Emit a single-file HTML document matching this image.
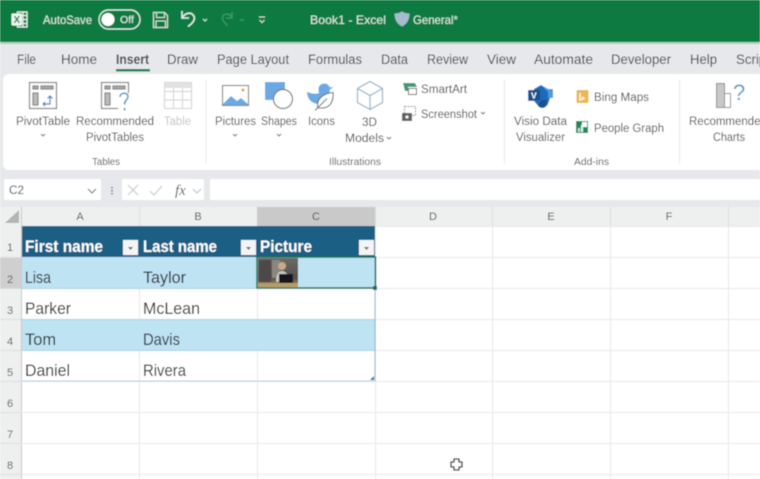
<!DOCTYPE html>
<html><head><meta charset="utf-8"><style>
html,body{margin:0;padding:0;background:#fff}
svg{display:block;font-family:"Liberation Sans",sans-serif}
.tb{fill:#dcefe4;font-size:12px}
.tab{fill:#404040;font-size:13.5px}
.lb{fill:#464646;font-size:11.5px}
.gp{fill:#505050;font-size:10px}
.hd{fill:#4a4a4a;font-size:11px;text-anchor:middle}
.rn{fill:#555;font-size:11px;text-anchor:middle}
.c{fill:#202020;font-size:17px}
.h{fill:#fff;font-size:17px;font-weight:bold}
</style></head><body>
<svg width="760" height="479" viewBox="0 0 760 479" xmlns="http://www.w3.org/2000/svg">
<defs><filter id="b" x="-5%" y="-5%" width="110%" height="110%"><feGaussianBlur stdDeviation="0.4"/></filter>
<linearGradient id="ph" x1="0" y1="0" x2="0" y2="1"><stop offset="0" stop-color="#6d6a66"/><stop offset=".7" stop-color="#55514c"/><stop offset="1" stop-color="#a89468"/></linearGradient></defs>
<g filter="url(#b)">
<rect width="760" height="479" fill="#fff"/>
<!-- title bar -->
<rect width="760" height="42" fill="#0c7a43"/>
<rect y="42" width="760" height="2" fill="#a9d3bb"/>
<rect y="44" width="760" height="165" fill="#e6e8eb"/>
<!-- excel icon -->
<rect x="17.500" y="12" width="9.500" height="15" fill="#0c7a43" stroke="#e8f2ec" stroke-width="1.300"/>
<path d="M20 15.500h7M20 19.500h7M20 23.500h7M23 12v15" stroke="#e8f2ec" stroke-width="1.200"/>
<rect x="11.500" y="13.500" width="10.500" height="12" rx="1" fill="#eef5f0"/>
<text x="13.500" y="23" font-size="10" font-weight="bold" fill="#0c7a43">X</text>
<text class="tb" x="43" y="24" textLength="49" lengthAdjust="spacingAndGlyphs">AutoSave</text>
<rect x="99" y="10" width="41" height="19" rx="9.500" fill="none" stroke="#e8f2ec" stroke-width="1.200"/>
<circle cx="108" cy="19.500" r="6.500" fill="#fff"/>
<text x="120" y="23" font-size="10" fill="#e8f2ec" textLength="14" lengthAdjust="spacingAndGlyphs">Off</text>
<!-- save -->
<path d="M153.500 12.500h11l3 3v12h-14z" fill="none" stroke="#cfe5d8" stroke-width="1.200"/>
<path d="M156.500 13v4.500h8v-4.500M156 27v-6h9.500v6" fill="none" stroke="#cfe5d8" stroke-width="1.100"/>
<!-- undo -->
<path d="M182 11v7h7M182.500 17.500c3-5 8.500-5.500 11-2 2.500 3.500-.5 7.500-5.500 11" fill="none" stroke="#dcefe4" stroke-width="1.600"/>
<path d="M203 19l2 2 2-2" fill="none" stroke="#cfe5d8" stroke-width="1"/>
<path d="M232 12v6h-6M232 17c-3-4-7.500-3.500-9-1-1.500 2.500.5 6 4.500 9.500" fill="none" stroke="#3f9a6a" stroke-width="1.300"/>
<path d="M240 19l2 2 2-2" fill="none" stroke="#3f9a6a" stroke-width="1"/>
<path d="M259 17h6M259.500 20l2.500 2.500 2.500-2.500" fill="none" stroke="#cfe5d8" stroke-width="1"/>
<text class="tb" x="310" y="24" textLength="76" lengthAdjust="spacingAndGlyphs">Book1  -  Excel</text>
<path d="M402 11.500c2.500 1.500 5 2 7.500 2 0 6-2.500 10.500-7.500 13-5-2.500-7.500-7-7.500-13 2.500 0 5-.5 7.500-2z" fill="#a4bccd"/>
<text class="tb" x="413" y="24" textLength="45" lengthAdjust="spacingAndGlyphs">General*</text>
<!-- tabs -->
<text class="tab" x="17" y="64" textLength="19" lengthAdjust="spacingAndGlyphs">File</text>
<text class="tab" x="61" y="64" textLength="36" lengthAdjust="spacingAndGlyphs">Home</text>
<text class="tab" x="116" y="64" textLength="33" lengthAdjust="spacingAndGlyphs" style="font-weight:bold">Insert</text>
<rect x="116" y="69" width="34" height="2.500" fill="#1f7c4d"/>
<text class="tab" x="167" y="64" textLength="31" lengthAdjust="spacingAndGlyphs">Draw</text>
<text class="tab" x="217" y="64" textLength="72" lengthAdjust="spacingAndGlyphs">Page Layout</text>
<text class="tab" x="308" y="64" textLength="54" lengthAdjust="spacingAndGlyphs">Formulas</text>
<text class="tab" x="381" y="64" textLength="27" lengthAdjust="spacingAndGlyphs">Data</text>
<text class="tab" x="427" y="64" textLength="41" lengthAdjust="spacingAndGlyphs">Review</text>
<text class="tab" x="487" y="64" textLength="29" lengthAdjust="spacingAndGlyphs">View</text>
<text class="tab" x="534" y="64" textLength="59" lengthAdjust="spacingAndGlyphs">Automate</text>
<text class="tab" x="611" y="64" textLength="60" lengthAdjust="spacingAndGlyphs">Developer</text>
<text class="tab" x="690" y="64" textLength="27" lengthAdjust="spacingAndGlyphs">Help</text>
<text class="tab" x="736" y="64" textLength="34" lengthAdjust="spacingAndGlyphs">Script</text>
<!-- ribbon -->
<rect x="3" y="74" width="780" height="96" rx="6" fill="#fff"/>
<path d="M206 80v84M504.500 80v84M679.500 80v84" stroke="#e8e8e8" stroke-width="1"/>
<!-- pivot icon -->
<g fill="none" stroke="#8a8a8a" stroke-width="1.300">
<rect x="29.500" y="82.500" width="27" height="26"/><rect x="33" y="86" width="5" height="3" fill="#aaa"/><rect x="41" y="86" width="12" height="3" fill="#aaa"/><rect x="33" y="93" width="5" height="12" fill="#bbb"/>
<rect x="101.500" y="82.500" width="27" height="26"/><rect x="105" y="86" width="5" height="3" fill="#aaa"/><rect x="113" y="86" width="12" height="3" fill="#aaa"/><rect x="105" y="93" width="5" height="12" fill="#bbb"/>
</g>
<path d="M43 104h7v-8M47.500 98.500l2.500-2.500 2.500 2.500M43 104l2-2M43 104l2 2" fill="none" stroke="#3a80b8" stroke-width="1.200"/>
<rect x="118" y="93" width="13" height="18" fill="#fff"/>
<path d="M120 97c0-5 8-5 8-.5 0 3.500-3.500 3.500-3.500 8M124.500 108v2.500" fill="none" stroke="#4a97c9" stroke-width="1.600"/>
<g fill="none" stroke="#d8d8d8" stroke-width="1.200"><rect x="164.500" y="82.500" width="27" height="26"/><path d="M164 91.500h28M164 100h28M173.500 82v27M182.500 82v27"/></g>
<rect x="165" y="83" width="26" height="5" fill="#e2e2e2"/>
<!-- pictures -->
<rect x="222.500" y="85.500" width="26" height="20" fill="#fff" stroke="#8a8a8a" stroke-width="1.200"/>
<path d="M223 104l8-8 6 5 4-3 7 6v1h-25z" fill="#6aa9e4"/><circle cx="243" cy="90" r="1.500" fill="#e0a040"/>
<!-- shapes -->
<rect x="265" y="82" width="20" height="18" fill="#6aa9e4"/>
<circle cx="283" cy="99" r="9.500" fill="#fff" stroke="#7a7a7a" stroke-width="1.200"/>
<!-- icons: duck + leaf -->
<path d="M307 91.500c3 2 8 3 12 1.500-.5-1.500-.5-3-.5-4 0-3.500 3-5.500 6-5.500 2.500 0 4.500 1.500 5 3.500l4 .5-3.500 2c-.5 4-2 7-5 9-2 3-4 5-6 5.500-7 0-12-5-12-12.500z" fill="#6aa9e4"/>
<path d="M318 108c-2-7 3-14.500 15-15.500 1 10-4 16-12 15.500z" fill="#fff" stroke="#6b6b6b" stroke-width="1.100"/>
<path d="M315 110.500l12-12" fill="none" stroke="#6b6b6b" stroke-width="1.100"/>
<!-- 3D -->
<path d="M370 81.500l12.500 7v14l-12.500 7-12.500-7v-14zM357.500 88.500l12.500 7 12.500-7M370 95.500v14" fill="none" stroke="#8fb2cc" stroke-width="1.200"/>
<!-- smartart -->
<path d="M403 83h12l2 4h-9v4h-3z" fill="#3f9a78"/>
<rect x="408.500" y="88.500" width="8" height="6" fill="#fff" stroke="#666"/>
<!-- screenshot -->
<rect x="404.500" y="106.500" width="11" height="9" fill="none" stroke="#888" stroke-dasharray="2 1"/>
<rect x="402.500" y="113.500" width="9" height="7" fill="#666" stroke="#555"/><circle cx="407" cy="117" r="1.500" fill="#fff"/>
<!-- visio -->
<path d="M534 89l7-4 7 4 5 0v9h-3l-2 6c-2 4-6 5-9 3l-5-6h-6V90h6z" fill="#1a6bb8"/>
<path d="M541 85l7 4h5v9h-5v-6z" fill="#4a9ae0"/><rect x="529" y="90" width="11" height="10" rx="1" fill="#14518f"/>
<text x="531" y="98.500" font-size="8.500" font-weight="bold" fill="#fff">V</text>
<path d="M541 100h6c0 3-1 6-3 7.500-2 .5-4 0-6-1.500z" fill="#1d4f8f"/>
<!-- bing -->
<rect x="576.500" y="90" width="12" height="13" rx="1" fill="#edb84d"/>
<path d="M580 93v7l4-1.500-2-1.500" fill="none" stroke="#fff" stroke-width="1.200"/>
<!-- people graph -->
<rect x="576" y="121" width="12" height="12" fill="#1a8a5a"/>
<rect x="582" y="122" width="5" height="5" fill="#fff"/><rect x="578" y="128" width="2" height="4" fill="#c8e8d8"/><rect x="581" y="125" width="2" height="7" fill="#e8f4ee"/>
<!-- rec charts -->
<rect x="716.500" y="83.500" width="8" height="24" fill="#c8c8c8" stroke="#8a8a8a"/>
<rect x="724.500" y="93.500" width="6" height="14" fill="#fff" stroke="#8a8a8a"/>
<text x="733" y="100" font-size="22" fill="#5b9bc4">?</text>
<!-- ribbon labels -->
<text class="lb" x="16" y="125" textLength="54" lengthAdjust="spacingAndGlyphs">PivotTable</text>
<text class="lb" x="76" y="125" textLength="78" lengthAdjust="spacingAndGlyphs">Recommended</text>
<text class="lb" x="86" y="141" textLength="58" lengthAdjust="spacingAndGlyphs">PivotTables</text>
<text class="lb" x="164" y="125" textLength="27" lengthAdjust="spacingAndGlyphs" style="fill:#c4c4c4">Table</text>
<text class="lb" x="215" y="125" textLength="41" lengthAdjust="spacingAndGlyphs">Pictures</text>
<text class="lb" x="261" y="125" textLength="36" lengthAdjust="spacingAndGlyphs">Shapes</text>
<text class="lb" x="308" y="125" textLength="27" lengthAdjust="spacingAndGlyphs">Icons</text>
<text class="lb" x="362" y="126" textLength="15" lengthAdjust="spacingAndGlyphs">3D</text>
<text class="lb" x="345" y="142" textLength="39" lengthAdjust="spacingAndGlyphs">Models</text>
<text class="lb" x="421" y="93" textLength="46" lengthAdjust="spacingAndGlyphs">SmartArt</text>
<text class="lb" x="421" y="118" textLength="56" lengthAdjust="spacingAndGlyphs">Screenshot</text>
<text class="lb" x="514" y="125" textLength="53" lengthAdjust="spacingAndGlyphs">Visio Data</text>
<text class="lb" x="516" y="141" textLength="49" lengthAdjust="spacingAndGlyphs">Visualizer</text>
<text class="lb" x="594" y="101" textLength="55" lengthAdjust="spacingAndGlyphs">Bing Maps</text>
<text class="lb" x="594" y="132" textLength="70" lengthAdjust="spacingAndGlyphs">People Graph</text>
<text class="lb" x="689" y="125" textLength="78" lengthAdjust="spacingAndGlyphs">Recommended</text>
<text class="lb" x="713" y="141" textLength="32" lengthAdjust="spacingAndGlyphs">Charts</text>
<g fill="none" stroke="#666" stroke-width="1">
<path d="M41 134l2 2 2-2M233 134l2 2 2-2M277 134l2 2 2-2M387 137l2 2 2-2M481 112l2 2 2-2"/></g>
<text class="gp" x="92" y="165" textLength="28" lengthAdjust="spacingAndGlyphs">Tables</text>
<text class="gp" x="329" y="165" textLength="52" lengthAdjust="spacingAndGlyphs">Illustrations</text>
<text class="gp" x="574" y="165" textLength="35" lengthAdjust="spacingAndGlyphs">Add-ins</text>
<!-- formula bar -->
<rect x="4" y="179" width="97" height="21" rx="2" fill="#fff"/>
<text x="9" y="194" font-size="12" fill="#444" textLength="15" lengthAdjust="spacingAndGlyphs">C2</text>
<path d="M88 189l4 4 4-4" fill="none" stroke="#666" stroke-width="1.100"/>
<path d="M112 187v1.500M112 190v1.500M112 193v1.500" stroke="#555" stroke-width="1.500"/>
<rect x="122" y="179" width="82" height="21" rx="2" fill="#fff"/>
<path d="M128 185l10 10M138 185l-10 10" stroke="#c8c8c8" stroke-width="1.200"/>
<path d="M150 191l4 4 8-9" fill="none" stroke="#c8c8c8" stroke-width="1.200"/>
<text x="175" y="195" font-family="Liberation Serif" font-style="italic" font-size="15" fill="#555">fx</text>
<path d="M193 189l4 4 4-4" fill="none" stroke="#bbb" stroke-width="1"/>
<rect x="210" y="179" width="550" height="21" rx="2" fill="#fff"/>
<!-- headers -->
<rect y="207" width="760" height="19" fill="#eef0f0"/>
<rect x="0" y="226" width="21" height="253" fill="#eef0f0"/>
<rect x="257" y="207" width="118" height="19" fill="#c9c9c9"/>
<rect x="0" y="257" width="21" height="31" fill="#cfcfcf"/>
<path d="M19 210v13h-14z" fill="#b4b4b4"/>
<path d="M21.500 207v272" stroke="#c8c8c8"/>
<path d="M139.500 207v19M375.500 207v19M492.500 207v19M610.500 207v19M728.500 207v19" stroke="#dcdcdc"/>
<path d="M0 319.500h21M0 350.500h21M0 381.500h21M0 412.500h21M0 443.500h21M0 474.500h21M0 288.500h21M0 257.500h21" stroke="#dcdcdc"/>
<text class="hd" x="80" y="220">A</text><text class="hd" x="198" y="220">B</text><text class="hd" x="316" y="220">C</text><text class="hd" x="433" y="220">D</text><text class="hd" x="551" y="220">E</text><text class="hd" x="669" y="220">F</text>
<text class="rn" x="10" y="251">1</text><text class="rn" x="10" y="283">2</text><text class="rn" x="10" y="314">3</text><text class="rn" x="10" y="345">4</text><text class="rn" x="10" y="376">5</text><text class="rn" x="10" y="407">6</text><text class="rn" x="10" y="438">7</text><text class="rn" x="10" y="469">8</text>
<!-- grid -->
<g stroke="#e8e8e8"><path d="M21 412.500h739M21 443.500h739M21 474.500h739M21 381.500h739M375 257.500h385M375 288.500h385M375 319.500h385M375 350.500h385M375 226.500h385M139.500 288v31M139.500 350v129M257.500 288v191M375.500 226v253M492.500 226v253M610.500 226v253M728.500 226v253"/></g>
<!-- table -->
<rect x="22" y="226" width="353" height="31" fill="#1b5f85"/>
<rect x="22" y="257" width="353" height="31" fill="#bee3f3"/>
<rect x="22" y="319" width="353" height="31" fill="#bee3f3"/>
<path d="M22 288.500h353M22 319.500h353M22 350.500h353M22 381h353" stroke="#a8d2e6"/>
<path d="M375 257v124" stroke="#7fb4cf"/>
<g fill="#f4f4f4"><rect x="123" y="240" width="15" height="15"/><rect x="241" y="240" width="15" height="15"/><rect x="359" y="240" width="15" height="15"/></g>
<path d="M128 247h5l-2.500 3zM246 247h5l-2.500 3zM364 247h5l-2.500 3z" fill="#666"/>
<text class="h" x="25" y="252" textLength="78" lengthAdjust="spacingAndGlyphs">First name</text>
<text class="h" x="143" y="252" textLength="74" lengthAdjust="spacingAndGlyphs">Last name</text>
<text class="h" x="260" y="252" textLength="52" lengthAdjust="spacingAndGlyphs">Picture</text>
<text class="c" x="25" y="283" textLength="26" lengthAdjust="spacingAndGlyphs">Lisa</text>
<text class="c" x="143" y="283" textLength="43" lengthAdjust="spacingAndGlyphs">Taylor</text>
<text class="c" x="25" y="314" textLength="46" lengthAdjust="spacingAndGlyphs">Parker</text>
<text class="c" x="143" y="314" textLength="57" lengthAdjust="spacingAndGlyphs">McLean</text>
<text class="c" x="25" y="345" textLength="31" lengthAdjust="spacingAndGlyphs">Tom</text>
<text class="c" x="143" y="345" textLength="37" lengthAdjust="spacingAndGlyphs">Davis</text>
<text class="c" x="25" y="376" textLength="45" lengthAdjust="spacingAndGlyphs">Daniel</text>
<text class="c" x="143" y="376" textLength="43" lengthAdjust="spacingAndGlyphs">Rivera</text>
<path d="M370 380h4v-4z" fill="#1b5f85"/>
<!-- picture -->
<rect x="258" y="258" width="40" height="29" fill="url(#ph)"/>
<rect x="259" y="260" width="12" height="22" fill="#4d4a48"/>
<rect x="272" y="260" width="8" height="18" fill="#8a8782"/>
<circle cx="282" cy="266" r="4" fill="#c8a888"/>
<path d="M276 282c0-8 3-11 6-11s7 3 8 11z" fill="#c9c5c0"/>
<rect x="279" y="274" width="14" height="9" fill="#16171c"/>
<rect x="258" y="283" width="40" height="4" fill="#b89c62"/>
<rect x="257" y="257" width="118.500" height="31" fill="none" stroke="#1f6f4a" stroke-width="1.500"/>
<rect x="373" y="286" width="4" height="4" fill="#1f6f4a"/>
<!-- cursor -->
<path d="M454 459h5v3h3v5h-3v3h-5v-3h-3v-5h3z" fill="#fff" stroke="#222" stroke-width="1.300" stroke-linejoin="round"/>
</g>
</svg>
</body></html>
